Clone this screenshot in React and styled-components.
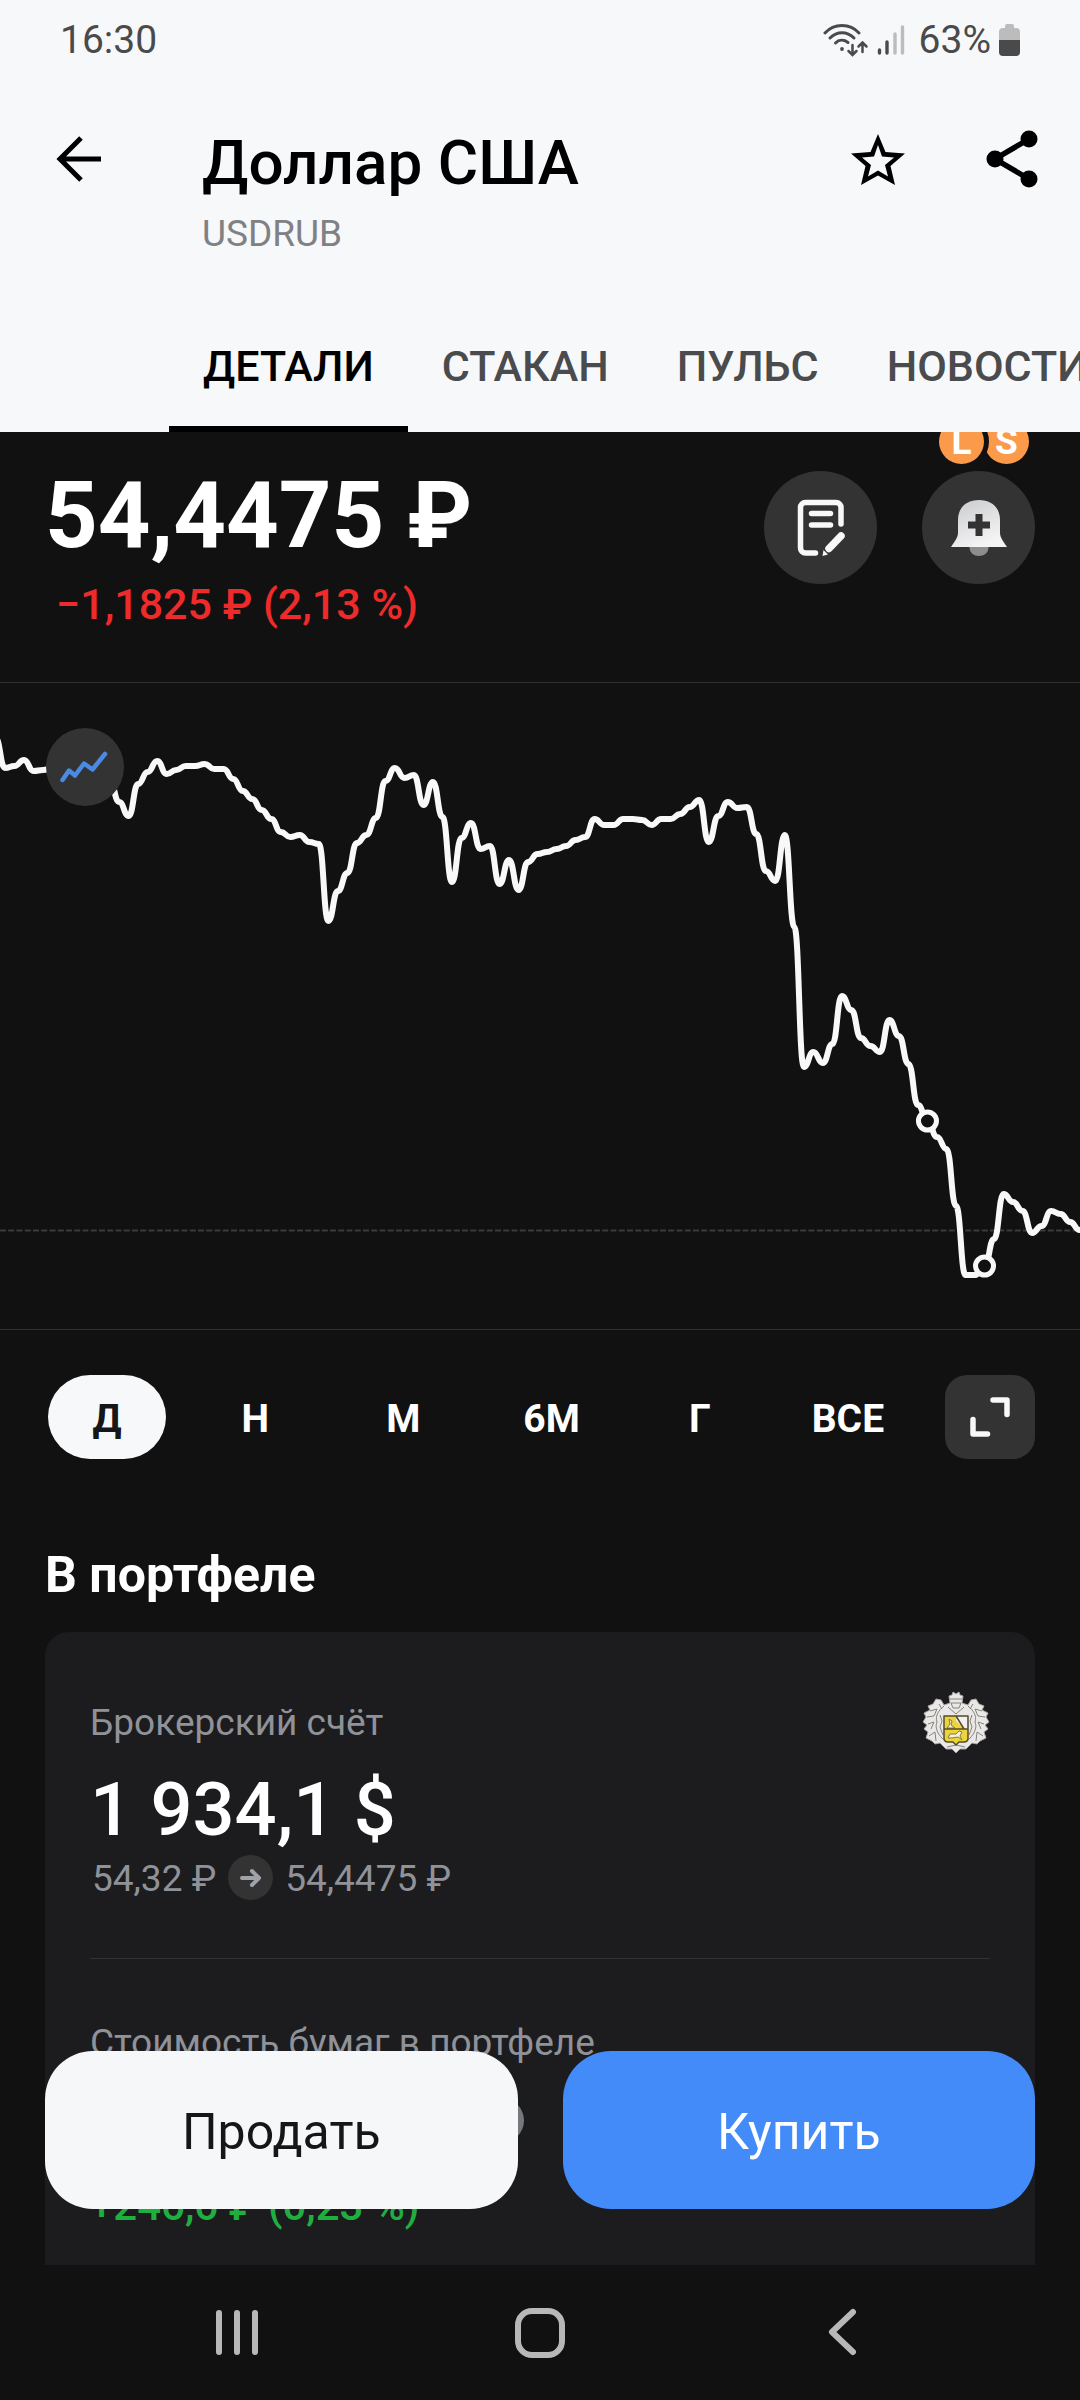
import React, { useState } from "react";
import styled, { createGlobalStyle, css } from "styled-components";

const GlobalStyle = createGlobalStyle`
  *, *::before, *::after { box-sizing: border-box; }
  html, body { margin: 0; background: #111111; }
  body, button { font-family: Roboto, "Noto Sans", sans-serif; }
  button { border: 0; padding: 0; margin: 0; background: none; color: inherit; cursor: pointer; }
  svg { display: block; }
  h1, h2, p { margin: 0; }
`;

const Screen = styled.div`
  height: 100vh;
  display: flex;
  flex-direction: column;
  overflow: hidden;
  background: #111111;
  color: #ffffff;
`;

const Header = styled.header`
  flex: none;
  background: #f7f8fa;
  color: #000000;
`;

const StatusBar = styled.div`
  display: flex;
  align-items: center;
  justify-content: space-between;
  height: 76px;
  padding: 4px 60px 0;
  font-size: 39px;
  line-height: 48px;
  color: #4a4a4a;
`;

const StatusIcons = styled.div`
  display: flex;
  align-items: center;
  gap: 8px;
`;

const BatteryLevel = styled.span`
  padding-left: 6px;
`;

const AppBar = styled.div`
  display: flex;
  align-items: flex-start;
  padding: 50px 34px 42px 44px;
`;

const IconButton = styled.button`
  flex: none;
  display: grid;
  place-items: center;
  width: 69px;
  height: 66px;
`;

const Titles = styled.div`
  flex: 1;
  min-width: 0;
  padding-left: 89px;
`;

const Title = styled.h1`
  font-size: 62px;
  line-height: 74px;
  font-weight: 500;
  white-space: nowrap;
`;

const Ticker = styled.p`
  margin-top: 10px;
  font-size: 37px;
  line-height: 48px;
  color: #808184;
`;

const BarActions = styled.div`
  display: flex;
  gap: 65px;
`;

const Tabs = styled.nav`
  display: flex;
  padding-left: 169px;
  overflow: hidden;
`;

const Tab = styled.button`
  flex: none;
  height: 132px;
  padding: 0 34px;
  font-size: 43px;
  line-height: 48px;
  font-weight: 500;
  color: ${(p) => (p.$active ? "#000000" : "#4a4b4d")};
  ${(p) => p.$active && css`box-shadow: inset 0 -6px 0 #000000;`}
`;

const Main = styled.main`
  position: relative;
  flex: 1;
  min-height: 0;
  display: flex;
`;

const Scroll = styled.div`
  flex: 1;
  min-width: 0;
  overflow: hidden auto;
  scrollbar-width: none;
`;

const Quote = styled.section`
  display: flex;
  justify-content: space-between;
  align-items: flex-start;
  padding: 34px 45px 50px;
  border-bottom: 1px solid #303030;
`;

const Price = styled.p`
  font-size: 92px;
  line-height: 100px;
  font-weight: 700;
  white-space: nowrap;
`;

const Change = styled.p`
  margin-top: 10px;
  padding-left: 11px;
  font-size: 43px;
  line-height: 56px;
  font-weight: 500;
  color: #ee2b2b;
`;

const QuoteActions = styled.div`
  display: flex;
  gap: 45px;
  padding-top: 5px;
`;

const RoundButton = styled.button`
  position: relative;
  display: grid;
  place-items: center;
  width: 113px;
  height: 113px;
  border-radius: 50%;
  background: #333333;
`;

const Badges = styled.span`
  position: absolute;
  top: -52px;
  left: 17px;
  display: flex;
`;

const Badge = styled.span`
  display: grid;
  place-items: center;
  width: 45px;
  height: 45px;
  border-radius: 50%;
  background: #fb9a4b;
  color: #ffffff;
  font-size: 37px;
  line-height: 45px;
  font-weight: 700;
  ${(p) => p.$front && css`z-index: 1; box-shadow: 0 0 0 5px #111111;`}
`;

const ChartBox = styled.section`
  position: relative;
  border-bottom: 1px solid #303030;

  & > svg {
    width: 100%;
    height: auto;
  }
`;

const ChartTypeButton = styled.button`
  position: absolute;
  top: 45px;
  left: 46px;
  display: grid;
  place-items: center;
  width: 78px;
  height: 78px;
  border-radius: 50%;
  background: #333333;
`;

const Periods = styled.div`
  display: flex;
  gap: 38px;
  padding: 45px 45px 0 48px;
`;

const PeriodList = styled.div`
  flex: 1;
  display: grid;
  grid-template-columns: repeat(6, 1fr);
  gap: 30px;
`;

const Period = styled.button`
  height: 84px;
  padding-top: 4px;
  border-radius: 42px;
  font-size: 39px;
  line-height: 48px;
  font-weight: 700;
  background: ${(p) => (p.$active ? "#f7f8fa" : "transparent")};
  color: ${(p) => (p.$active ? "#151618" : "#ffffff")};
`;

const ExpandButton = styled.button`
  display: grid;
  place-items: center;
  width: 90px;
  height: 84px;
  border-radius: 22px;
  background: #333333;
`;

const SectionTitle = styled.h2`
  padding: 86px 45px 27px;
  font-size: 50px;
  line-height: 60px;
  font-weight: 700;
`;

const Card = styled.section`
  margin: 0 45px;
  padding: 67px 45px 240px;
  border-radius: 24px;
  background: #1c1c1e;
`;

const CardHead = styled.div`
  display: flex;
  align-items: center;
  justify-content: space-between;
  height: 48px;
`;

const Label = styled.p`
  font-size: 37px;
  line-height: 48px;
  color: #909299;
`;

const Amount = styled.p`
  margin-top: 19px;
  font-size: 74px;
  line-height: 88px;
  font-weight: 500;
  white-space: nowrap;
`;

const Rates = styled.div`
  display: flex;
  align-items: flex-start;
  gap: 12px;
  margin-top: 1px;
  padding-left: 2px;
  font-size: 37px;
  line-height: 48px;
  color: #909299;
`;

const Dot = styled.span`
  display: grid;
  place-items: center;
  width: 45px;
  height: 45px;
  border-radius: 50%;
  background: ${(p) => (p.$light ? "#77787c" : "#333333")};
`;

const Divider = styled.hr`
  height: 1px;
  margin: 55px 0 60px;
  border: 0;
  background: #333335;
`;

const InfoRow = styled.div`
  display: flex;
  align-items: center;
  justify-content: flex-end;
  width: 434px;
  height: 88px;
  margin-top: 9px;
`;

const Profit = styled.p`
  margin-top: 14px;
  font-size: 42px;
  line-height: 56px;
  font-weight: 500;
  color: #1faf3f;
`;

const TradeBar = styled.div`
  position: absolute;
  left: 45px;
  right: 45px;
  bottom: 56px;
  display: grid;
  grid-template-columns: 1fr 1fr;
  gap: 45px;
`;

const TradeButton = styled.button`
  height: 158px;
  padding-top: 4px;
  border-radius: 48px;
  font-size: 50px;
  line-height: 60px;
  background: ${(p) => (p.$primary ? "#448bfa" : "#f6f7f9")};
  color: ${(p) => (p.$primary ? "#ffffff" : "#151618")};
`;

const SystemNav = styled.nav`
  flex: none;
  display: grid;
  grid-template-columns: repeat(3, 1fr);
  align-items: center;
  height: 135px;
  padding: 0 86px;
  background: #111111;
`;

const SystemButton = styled.button`
  display: grid;
  place-items: center;
  height: 100px;
`;

const STEP = 9.51;
const VALUES = [
  55, 85, 83, 77, 88, 87, 85, 84, 84, 84, 86, 90, 97, 119, 133, 101, 89, 78, 91,
  87, 83, 83, 81, 86, 86, 96, 108, 116, 127, 136, 149, 154, 152, 159, 161, 238,
  208, 190, 160, 152, 135, 98, 85, 95, 92, 122, 99, 134, 199, 155, 140, 166, 163,
  201, 177, 207, 179, 171, 169, 166, 163, 157, 154, 136, 142, 142, 136, 136, 137,
  142, 136, 136, 131, 124, 117, 159, 133, 119, 125, 124, 151, 188, 198, 152, 244,
  384, 369, 380, 361, 313, 327, 355, 363, 369, 337, 353, 381, 422, 438, 454, 466,
  523, 592, 592, 583, 556, 511, 519, 528, 550, 543, 528, 531, 539, 547, 552,
];
const DEALS = [98, 104];

const pointX = (i) => 5 + STEP * (i - 1);

const linePath = VALUES.map((y, i) => {
  const x = pointX(i);
  if (i === 0) return `M${x} ${y}`;
  const mid = x - STEP / 2;
  return `C${mid} ${VALUES[i - 1]} ${mid} ${y} ${x} ${y}`;
}).join("");

function Chart() {
  return (
    <svg viewBox="0 0 1080 646" fill="none" role="img" aria-label="График цены">
      <path d="M0 547.5H1080" stroke="#3b3b3b" strokeWidth="2" strokeDasharray="6 2.25" />
      <path d={linePath} stroke="#f8f8f8" strokeWidth="6" strokeLinejoin="round" />
      {DEALS.map((i) => (
        <circle key={i} cx={pointX(i)} cy={VALUES[i]} r="9" fill="#111111" stroke="#f8f8f8" strokeWidth="5" />
      ))}
    </svg>
  );
}

const WifiIcon = () => (
  <svg width="46" height="36" viewBox="0 0 46 36" fill="none" stroke="#4a4a4a" strokeLinecap="round">
    <path d="M2 11C11 1 27 1 36 11" strokeWidth="3" />
    <path d="M7 16C14 9 24 9 31 16" strokeWidth="3" />
    <path d="M12.500 21C16 17.500 21 17.500 25 20.500" strokeWidth="3" />
    <circle cx="19" cy="27" r="1.900" fill="#4a4a4a" stroke="none" />
    <path d="M29.500 23V32M25.500 29L29.500 33L33.500 29" strokeWidth="2.500" />
    <path d="M39.500 30V21M35.500 24.500L39.500 20.500L43.500 24.500" strokeWidth="2.500" />
  </svg>
);

const SignalIcon = () => (
  <svg width="28" height="32" viewBox="0 0 28 32" fill="none" strokeWidth="3.400" strokeLinecap="round">
    <path d="M2.500 26V29M10 18V29" stroke="#4a4a4a" />
    <path d="M18 10V29M25.500 3V29" stroke="#bcbcbd" />
  </svg>
);

const BatteryIcon = () => (
  <svg width="21" height="32" viewBox="0 0 21 32">
    <path d="M6 4V2a2 2 0 0 1 2-2h5a2 2 0 0 1 2 2v2h2a4 4 0 0 1 4 4v8H0V8a4 4 0 0 1 4-4z" fill="#bcbcbd" />
    <path d="M0 16h21v12a4 4 0 0 1-4 4H4a4 4 0 0 1-4-4z" fill="#4a4a4a" />
  </svg>
);

const BackIcon = () => (
  <svg width="46" height="46" viewBox="0 0 46 46" fill="none" stroke="#000" strokeWidth="5">
    <path d="M45 23H4M25 2L4 23L25 44" />
  </svg>
);

const StarIcon = () => (
  <svg width="54" height="51" viewBox="0 0 54 51">
    <path
      fillRule="evenodd"
      d="M27 0L34.500 18L54 19.500L39.500 32L44 51L27 41.500L10 51L14.500 32L0 19.500L19.500 18ZM27 11L23 22.500L11 23.500L20 31L17 42.500L27 36.500L37 42.500L34 31L43 23.500L31 22.500Z"
    />
  </svg>
);

const ShareIcon = () => (
  <svg width="52" height="58" viewBox="0 0 52 58">
    <path d="M43 9L9 29L43 49" fill="none" stroke="#000" strokeWidth="5.500" />
    <circle cx="43" cy="9" r="8.500" />
    <circle cx="9" cy="29" r="8.500" />
    <circle cx="43" cy="49" r="8.500" />
  </svg>
);

const NoteIcon = () => (
  <svg width="48" height="58" viewBox="0 0 48 58" fill="none" stroke="#f8f8f8" strokeWidth="5.500" strokeLinecap="round">
    <path d="M18.500 54H8.500a5 5 0 0 1-5-5V8.500a5 5 0 0 1 5-5H39a5 5 0 0 1 5 5V25" />
    <path d="M14.500 14.500H33.500M14.500 26H33.500" />
    <path d="M44 37L32 49.500" strokeWidth="7.500" />
    <path d="M26.500 51L31 55.500L25.500 57Z" fill="#f8f8f8" stroke="none" />
  </svg>
);

const BellIcon = () => (
  <svg width="56" height="58" viewBox="0 0 56 58">
    <defs>
      <linearGradient id="bell" x1="0" y1="0" x2="0.5" y2="1">
        <stop offset="0" stopColor="#c9cacc" />
        <stop offset="1" stopColor="#f4f4f5" />
      </linearGradient>
    </defs>
    <path d="M18.500 47h19v2a9.500 8 0 0 1-19 0z" fill="#8d8d8e" />
    <path d="M28 1C15 1 7 9 7 21V34C7 39 3 43 0 48H56C53 43 49 39 49 34V21C49 9 41 1 28 1Z" fill="url(#bell)" />
    <path d="M24.500 15h7v7.500H39v7h-7.500V37h-7v-7.500H17v-7h7.500z" fill="#333333" />
  </svg>
);

const TrendIcon = () => (
  <svg width="50" height="32" viewBox="0 0 50 32" fill="none" stroke="#4b8ae3" strokeWidth="4.500" strokeLinecap="round" strokeLinejoin="round">
    <path d="M2.500 29L9 19.500L15 24.500L24 12.500L32.500 18.500L45 3" />
  </svg>
);

const ExpandIcon = () => (
  <svg width="40" height="40" viewBox="0 0 40 40" fill="none" stroke="#f8f8f8" strokeWidth="5.500" strokeLinecap="round" strokeLinejoin="round">
    <path d="M23 3H37V17.500M3 22.500V37H17.500" />
  </svg>
);

const RateArrow = () => (
  <svg width="22" height="20" viewBox="0 0 22 20" fill="none" stroke="#a0a2a9" strokeWidth="4" strokeLinecap="round" strokeLinejoin="round">
    <path d="M2 10H19M12 3L19 10L12 17" />
  </svg>
);

const CrestIcon = () => (
  <svg width="68" height="64" viewBox="0 0 68 64" strokeLinejoin="round">
    <path
      d="M27 5L30 4L31 1L34 3L37 1L38 4L41 5L40 12L46 14L49 9L54 8L57 13L62 15L60 19L66 22L64 26L67 31L63 34L66 38L62 41L64 47L58 50L55 53L50 52L44 58L38 58L34 62L30 58L24 58L18 52L13 53L10 50L4 47L6 41L2 38L5 34L1 31L4 26L2 22L8 19L6 15L11 13L14 8L19 9L22 14L28 12Z"
      fill="#e9e8e6"
      stroke="#a7a6a4"
      strokeWidth="1"
    />
    <g fill="none" stroke="#85847f" strokeWidth="1">
      <path d="M28 8H40M29 12H39L37 17H31ZM26 16L34 23L42 16" />
      <path d="M22 15C16 20 13 25 15 31C12 37 17 45 23 50M46 15C52 20 55 25 53 31C56 37 51 45 45 50" />
      <path d="M8 20L15 18L12 25L5 26M60 20L53 18L56 25L63 26M6 33L12 31L9 38M62 33L56 31L59 38M7 45L13 41L14 50M61 45L55 41L54 50" />
      <path d="M17 13L20 18M51 13L48 18M25 56L34 54L43 56M18 24L20 30L18 36L21 44M50 24L48 30L50 36L47 44" />
    </g>
    <path d="M22 25H46V47Q46 51 42 51H37L34 54L31 51H26Q22 51 22 47Z" fill="#eed43c" />
    <path d="M34 25H46V38H42L34 30Z" fill="#f1f0ee" />
    <path d="M27 28L30 30L29 34L33 37H25L28 33ZM26 47L28 43L34 43L37 40L40 41L38 45L40 49L36 46L30 47Z" fill="#f5f1dc" stroke="#8a7b35" strokeWidth="1" />
    <path d="M22 38H46M34 25L42 38M22 25H46V47Q46 51 42 51H37L34 54L31 51H26Q22 51 22 47Z" fill="none" stroke="#544b29" strokeWidth="1.500" />
  </svg>
);

const RecentIcon = () => (
  <svg width="44" height="48" viewBox="0 0 44 48" stroke="#b8b8b8" strokeWidth="6" strokeLinecap="round">
    <path d="M4 4V43M22 4V43M40 4V43" />
  </svg>
);

const HomeIcon = () => (
  <svg width="50" height="50" viewBox="0 0 50 50" fill="none" stroke="#b8b8b8" strokeWidth="6">
    <rect x="3" y="3" width="44" height="44" rx="14" />
  </svg>
);

const NavBackIcon = () => (
  <svg width="30" height="50" viewBox="0 0 30 50" fill="none" stroke="#b8b8b8" strokeWidth="6" strokeLinecap="round" strokeLinejoin="round">
    <path d="M25 4L4 24L25 44" />
  </svg>
);

const TABS = ["ДЕТАЛИ", "СТАКАН", "ПУЛЬС", "НОВОСТИ"];
const PERIODS = ["Д", "Н", "М", "6М", "Г", "ВСЕ"];

export default function App() {
  const [tab, setTab] = useState("ДЕТАЛИ");
  const [period, setPeriod] = useState("Д");

  return (
    <Screen>
      <GlobalStyle />
      <Header>
        <StatusBar>
          <span>16:30</span>
          <StatusIcons>
            <WifiIcon />
            <SignalIcon />
            <BatteryLevel>63%</BatteryLevel>
            <BatteryIcon />
          </StatusIcons>
        </StatusBar>
        <AppBar>
          <IconButton aria-label="Назад"><BackIcon /></IconButton>
          <Titles>
            <Title>Доллар США</Title>
            <Ticker>USDRUB</Ticker>
          </Titles>
          <BarActions>
            <IconButton aria-label="В избранное"><StarIcon /></IconButton>
            <IconButton aria-label="Поделиться"><ShareIcon /></IconButton>
          </BarActions>
        </AppBar>
        <Tabs>
          {TABS.map((name) => (
            <Tab key={name} $active={name === tab} onClick={() => setTab(name)}>{name}</Tab>
          ))}
        </Tabs>
      </Header>

      <Main>
        <Scroll>
          <Quote>
            <div>
              <Price>54,4475 ₽</Price>
              <Change>−1,1825 ₽ (2,13 %)</Change>
            </div>
            <QuoteActions>
              <RoundButton aria-label="Заявки"><NoteIcon /></RoundButton>
              <RoundButton aria-label="Уведомления">
                <Badges>
                  <Badge $front>L</Badge>
                  <Badge>S</Badge>
                </Badges>
                <BellIcon />
              </RoundButton>
            </QuoteActions>
          </Quote>

          <ChartBox>
            <Chart />
            <ChartTypeButton aria-label="Тип графика"><TrendIcon /></ChartTypeButton>
          </ChartBox>

          <Periods>
            <PeriodList>
              {PERIODS.map((name) => (
                <Period
                  key={name}
                  $active={name === period}
                  aria-pressed={name === period}
                  onClick={() => setPeriod(name)}
                >
                  {name}
                </Period>
              ))}
            </PeriodList>
            <ExpandButton aria-label="Развернуть"><ExpandIcon /></ExpandButton>
          </Periods>

          <SectionTitle>В портфеле</SectionTitle>
          <Card>
            <CardHead>
              <Label>Брокерский счёт</Label>
              <CrestIcon />
            </CardHead>
            <Amount>1 934,1 $</Amount>
            <Rates>
              <span>54,32 ₽</span>
              <Dot><RateArrow /></Dot>
              <span>54,4475 ₽</span>
            </Rates>
            <Divider />
            <Label>Стоимость бумаг в портфеле</Label>
            <InfoRow><Dot $light /></InfoRow>
            <Profit>+246,6 ₽ (0,23 %)</Profit>
          </Card>
        </Scroll>
        <TradeBar>
          <TradeButton>Продать</TradeButton>
          <TradeButton $primary>Купить</TradeButton>
        </TradeBar>
      </Main>

      <SystemNav>
        <SystemButton aria-label="Недавние"><RecentIcon /></SystemButton>
        <SystemButton aria-label="Домой"><HomeIcon /></SystemButton>
        <SystemButton aria-label="Назад"><NavBackIcon /></SystemButton>
      </SystemNav>
    </Screen>
  );
}
